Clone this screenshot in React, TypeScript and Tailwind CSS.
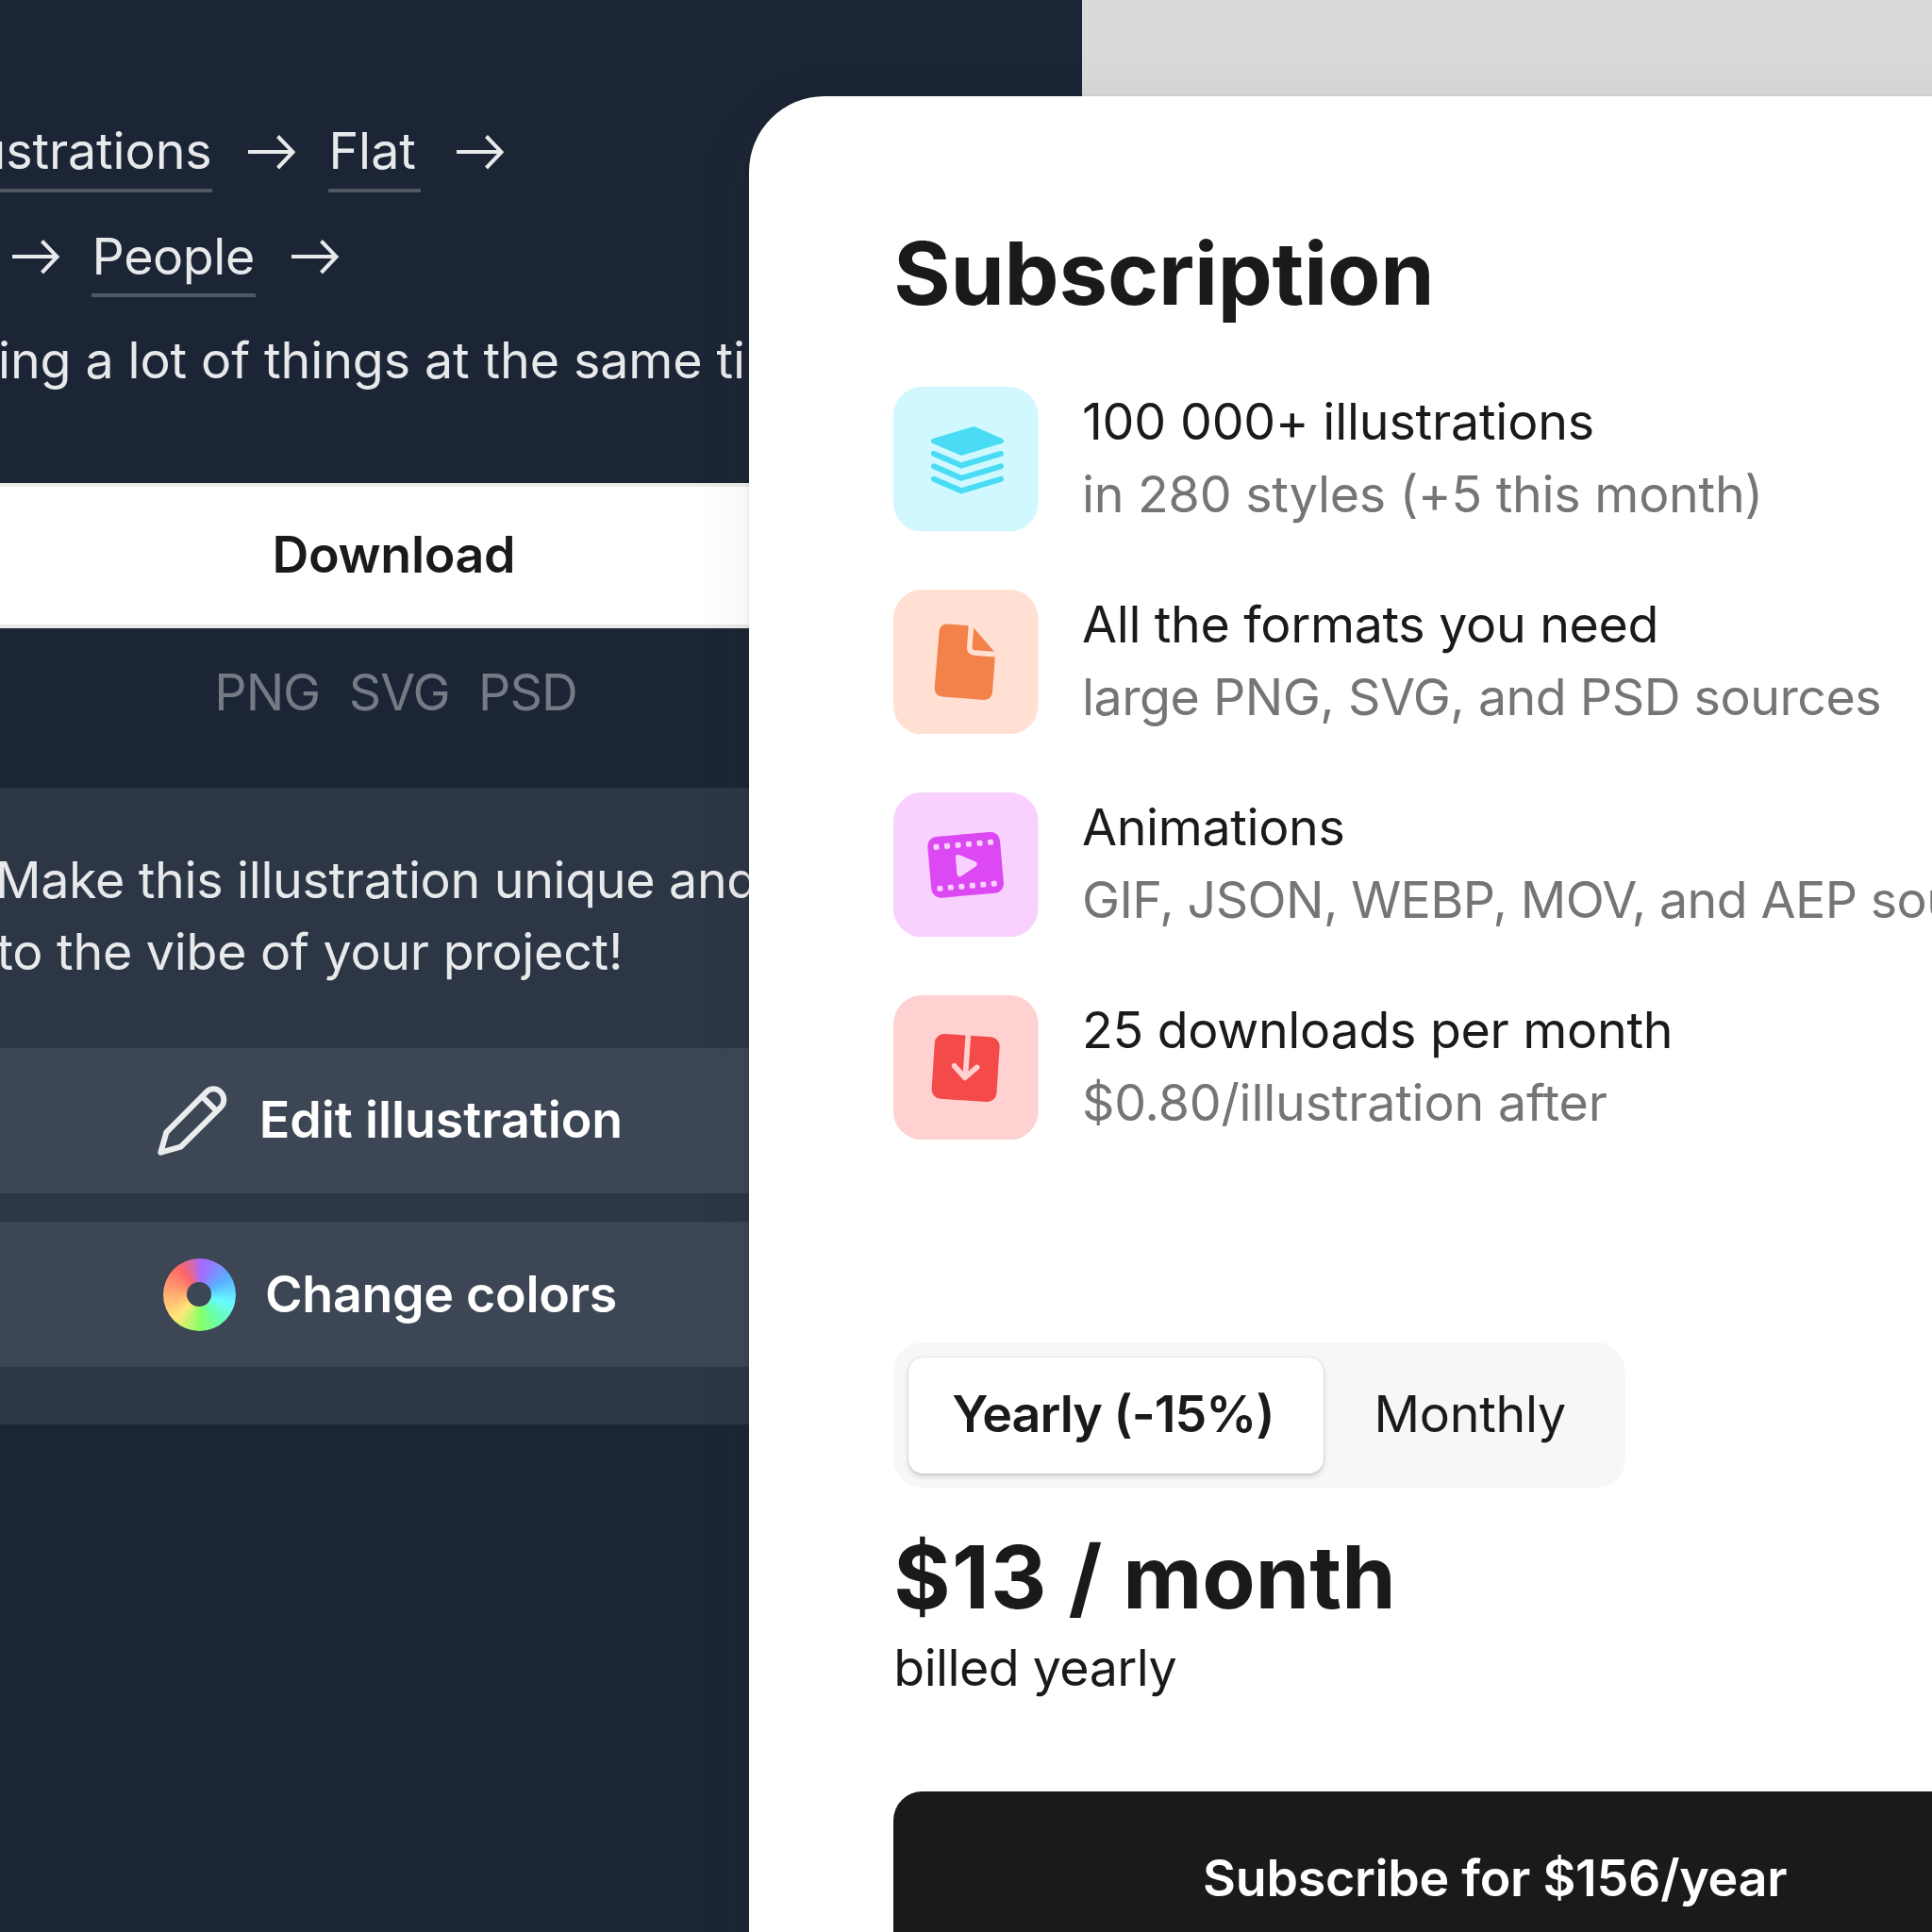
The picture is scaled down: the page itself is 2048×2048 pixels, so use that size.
import type { ReactNode } from "react";

const Arrow = () => (
  <svg className="h-[40px] w-[54px] shrink-0" viewBox="0 0 54 40" fill="none" stroke="#e8e9eb" strokeWidth="4">
    <path d="M2 20H50" />
    <path d="M33.500 3.500L49.500 20.200L33.500 37" />
  </svg>
);

const Crumb = ({ children, className = "" }: { children: string; className?: string }) => (
  <span className={`flex h-[96.500px] items-start border-b-[4px] border-[#505864] pt-[15px] leading-[76.8px] ${className}`}>
    {children}
  </span>
);

const Tile = ({ children }: { children: ReactNode }) => (
  <svg className="size-[153.6px] shrink-0" viewBox="22 28.5 461 461">
    {children}
  </svg>
);

const LayersIcon = () => (
  <Tile>
    <rect x="22" y="28.5" width="461" height="461" rx="92" fill="#d1f8ff" />
    <g fill="#4adcf4" stroke="#4adcf4" strokeLinejoin="round" strokeLinecap="round">
      <path d="M150 201L278 163L365 201L238 239Z" strokeWidth="16" />
      <g fill="none" strokeWidth="18" strokeLinejoin="miter">
        <path d="M151 241.500L238 279L364 241.500" />
        <path d="M151 281.500L238 319L364 281.500" />
        <path d="M151 322L238 359.500L364 322" />
      </g>
    </g>
  </Tile>
);

const FileIcon = () => (
  <Tile>
    <rect x="22" y="28.5" width="461" height="461" rx="92" fill="#ffe0d2" />
    <g fill="#f28249">
      <path d="M193 138L261 143.500L256 212Q256 236 280 238L345.500 243L337 356Q334 379 311 380L177 369Q154 366 153 343L168 160Q171 139 193 138Z" />
      <path d="M277.500 150L343 225.500L282 221.500Q273 221 273 212Z" />
    </g>
  </Tile>
);

const FilmIcon = () => (
  <Tile>
    <rect x="22" y="28.5" width="461" height="461" rx="92" fill="#f8d1fe" />
    <g transform="rotate(-5 252 259)">
      <rect x="136.500" y="161.500" width="231" height="195" rx="30" fill="#dc48f3" />
      <g fill="#f8d1fe">
        {[0, 1, 2, 3, 4, 5].map((i) => (
          <g key={i}>
            <rect x={155 + i * 34.6} y="185" width="18" height="18" rx="5" />
            <rect x={155 + i * 34.6} y="317.500" width="18" height="18" rx="5" />
          </g>
        ))}
        <path d="M231 234L279 259L231 286Z" stroke="#f8d1fe" strokeWidth="18" strokeLinejoin="round" />
      </g>
    </g>
  </Tile>
);

const DownloadIcon = () => (
  <Tile>
    <rect x="22" y="28.5" width="461" height="461" rx="92" fill="#ffd1d1" />
    <rect x="148.500" y="156" width="207" height="207" rx="30" fill="#f44a4a" transform="rotate(3.700 252 259.500)" />
    <g fill="none" stroke="#ffd1d1" strokeWidth="17" strokeLinejoin="round">
      <path d="M260.500 150L251 288" />
      <path d="M216 253L249.500 291L288 258" strokeLinecap="round" />
    </g>
  </Tile>
);

const features = [
  {
    icon: <LayersIcon />,
    title: "100 000+ illustrations",
    titleClass: "tracking-[-0.2px]",
    note: "in 280 styles (+5 this month)",
    noteClass: "tracking-[-0.25px]",
  },
  {
    icon: <FileIcon />,
    title: "All the formats you need",
    titleClass: "tracking-[-0.33px]",
    note: "large PNG, SVG, and PSD sources",
    noteClass: "tracking-[-0.5px]",
  },
  {
    icon: <FilmIcon />,
    title: "Animations",
    titleClass: "tracking-[-0.35px]",
    note: "GIF, JSON, WEBP, MOV, and AEP sources",
    noteClass: "tracking-[-0.62px]",
  },
  {
    icon: <DownloadIcon />,
    title: "25 downloads per month",
    titleClass: "tracking-[-0.3px]",
    note: "$0.80/illustration after",
    noteClass: "tracking-[-0.2px]",
  },
];

const Pencil = () => (
  <svg className="h-[74px] w-[74px] shrink-0" viewBox="80 92 222 222" fill="none" stroke="#ebecee" strokeWidth="18" strokeLinejoin="round">
    <path d="M90 304L108 240L236 111C248 99 268 99 280 111C294 124 294 146 282 159L154 286Z" />
    <path d="M222 126L267 171" />
  </svg>
);

export default function App() {
  return (
    <div className="relative h-[2048px] w-[2048px] overflow-hidden whitespace-nowrap bg-[#d9d9d9] font-['Inter',sans-serif] text-[53.76px] leading-[76.8px] text-[#1a1a1a]">
      <aside className="flex h-full w-[1146.9px] flex-col overflow-hidden bg-[#1c2535] text-[#e8e9eb]">
        <nav className="flex h-[218.900px] shrink-0 items-start pt-[107px]">
          <div className="flex w-[225.400px] shrink-0 justify-end">
            <Crumb className="pr-[0.800px] tracking-[-0.1px]">Illustrations</Crumb>
          </div>
          <div className="ml-[36px] mr-[33px] mt-[34px]"><Arrow /></div>
          <Crumb className="pr-[4.600px]">Flat</Crumb>
          <div className="ml-[36px] mt-[34px]"><Arrow /></div>
        </nav>
        <div className="flex h-[111.300px] shrink-0 items-start pl-[10.600px]">
          <div className="mr-[32px] mt-[33.500px]"><Arrow /></div>
          <Crumb className="pl-[1px] pr-[1.400px] tracking-[-0.45px]">People</Crumb>
          <div className="ml-[36px] mt-[33.500px]"><Arrow /></div>
        </div>
        <p className="mt-[14px] -ml-[2px] tracking-[-0.1px]">ing a lot of things at the same time</p>

        <div className="mt-[91px] flex h-[153.600px] shrink-0 items-center border-y-[4px] border-[#ebebea] bg-white pl-[288.500px] font-semibold tracking-[-0.33px] text-[#1a1a1a]">
          Download
        </div>
        <div className="mt-[30px] flex gap-[30.500px] pl-[227.300px] tracking-[-1px] text-[#757a84]">
          <span>PNG</span>
          <span>SVG</span>
          <span>PSD</span>
        </div>
        <section className="mt-[62.300px] flex h-[675.500px] shrink-0 flex-col bg-[#2d3645] pt-[60px]">
          <p className="-ml-[5px] tracking-[-0.33px]">Make this illustration unique and</p>
          <p className="-ml-[3.500px] tracking-[-0.27px]">to the vibe of your project!</p>
          <div className="mt-[62.800px] flex h-[153.600px] shrink-0 items-center gap-[33.800px] bg-[#3d4655] pl-[167px] font-semibold tracking-[-0.08px] text-white">
            <Pencil />
            Edit illustration
          </div>
          <div className="mt-[30.700px] flex h-[153.600px] shrink-0 items-center gap-[31.300px] bg-[#3d4655] pl-[172.900px] font-semibold tracking-[-0.3px] text-white">
            <span className="flex size-[76.800px] items-center justify-center rounded-full bg-[conic-gradient(#a66bff_8deg,#58b0ff_60deg,#6afaff_105deg,#66ffb0_140deg,#8bff66_180deg,#ffe879_225deg,#ff6666_325deg,#a66bff_368deg)]">
              <span className="size-[25.600px] rounded-full bg-[#3d4655]" />
            </span>
            Change colors
          </div>
        </section>
      </aside>

      <main className="absolute left-[793.700px] top-[102.400px] flex h-[2100px] w-[1582px] flex-col rounded-tl-[80px] bg-white px-[153.600px] pt-[126.500px] shadow-[0_0_4px_rgba(0,0,0,0.1),0_16px_64px_rgba(50,55,50,0.08)]">
        <h1 className="h-[180.700px] shrink-0 text-[92.160px] font-bold leading-[122.900px] tracking-[-0.2px]">Subscription</h1>
        <ul className="flex shrink-0 flex-col gap-[61.440px]">
          {features.map((f) => (
            <li key={f.title} className="flex h-[153.600px] gap-[46.080px]">
              {f.icon}
              <div className="-mt-[1px]">
                <p className={f.titleClass}>{f.title}</p>
                <p className={`pt-[1px] text-[#757575] ${f.noteClass}`}>{f.note}</p>
              </div>
            </li>
          ))}
        </ul>
        <div className="mt-[215px] flex h-[153.600px] w-[775.700px] shrink-0 items-center rounded-[31px] bg-[#f7f7f7] p-[15.360px]">
          <button className="flex h-full w-[440px] items-center rounded-[15.360px] bg-white pb-[1px] pl-[46.500px] font-semibold tracking-[-0.95px] shadow-[0_0_2px_rgba(0,0,0,0.18),0_3px_5px_rgba(0,0,0,0.16)]">
            Yearly (-15%)
          </button>
          <button className="ml-[53.800px] pb-[1px] tracking-[-0.25px]">Monthly</button>
        </div>
        <p className="mt-[34px] text-[92.160px] font-bold leading-[122.900px]">
          <span className="tracking-[1.300px]">$13</span> / month
        </p>
        <p className="-mt-[4px] tracking-[-0.55px]">billed yearly</p>
        <button className="mt-[92.500px] flex h-[184.300px] shrink-0 items-center justify-center rounded-[30.720px] bg-[#1a1a1a] font-semibold tracking-[-0.28px] text-white">
          Subscribe for $156/year
        </button>
      </main>
    </div>
  );
}
